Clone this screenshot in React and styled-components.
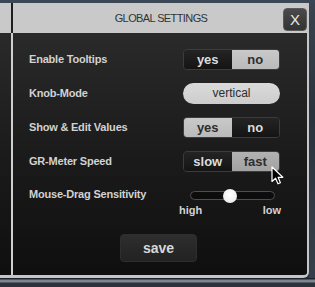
import React from 'react';
import styled, { createGlobalStyle } from 'styled-components';

const GlobalStyle = createGlobalStyle`
  body {
    margin: 0;
    background: #2b333d;
    font-family: "Liberation Sans", Arial, sans-serif;
  }
`;

const Screen = styled.div`
  width: 315px;
  height: 287px;
  display: flex;
  flex-direction: column;
  overflow: hidden;
`;

const TopStrip = styled.div`
  height: 3px;
  background: #3c4755;
`;

const Middle = styled.div`
  height: 275px;
  display: flex;
`;

const SideBg = styled.div`
  flex: 1;
  background: linear-gradient(180deg, #3a4452 0%, #2a323d 40%, #353f4c 100%);
`;

const BottomStrip = styled.div`
  height: 9px;
  background: linear-gradient(180deg, #1e232a 0px, #1e232a 1px, #7d858f 2px, #7d858f 4px, #2c333c 5px, #2c333c 100%);
`;

const Dialog = styled.div`
  width: 307px;
  display: flex;
  flex-direction: column;
  border-right: 2px solid #c6c6c6;
  border-bottom: 3px solid #c6c6c6;
  border-bottom-right-radius: 6px;
  overflow: hidden;
`;

const Header = styled.div`
  height: 30px;
  background: #c9c9c9;
  display: flex;
`;

const HeaderInner = styled.div`
  margin-left: 11px;
  border-left: 2px solid #1f1f1f;
  flex: 1;
  display: flex;
`;

const Title = styled.div`
  flex: 1;
  padding-left: 26px;
  text-align: center;
  line-height: 31px;
  font-size: 11px;
  letter-spacing: -0.6px;
  color: #333;
`;

const CloseButton = styled.button`
  width: 24px;
  height: 23px;
  align-self: flex-end;
  margin-bottom: 2px;
  padding: 0;
  border: 1px solid #5a5a5a;
  border-radius: 4px;
  background: linear-gradient(180deg, #4a4a4a, #333);
  color: #e8e8e8;
  font-family: "Liberation Sans", Arial, sans-serif;
  font-size: 15px;
`;

const Body = styled.div`
  height: 242px;
  display: flex;
  background: linear-gradient(180deg, #2a2a2a 0%, #1b1b1b 50%, #0f0f0f 100%);
`;

const Pane = styled.div`
  margin-left: 11px;
  border-left: 2px solid #cfcfcf;
  flex: 1;
  padding: 9px 27px 0 16px;
  display: flex;
  flex-direction: column;
`;

const Row = styled.div`
  height: 34px;
  display: flex;
  align-items: center;
  justify-content: space-between;
`;

const Label = styled.span`
  font-size: 11px;
  font-weight: bold;
  letter-spacing: -0.2px;
  color: #d2d2d2;
  line-height: 14px;
`;

const Segmented = styled.div`
  position: relative;
  width: 97px;
  height: 21px;
  box-sizing: border-box;
  display: flex;
  border: 1px solid #3c3c3c;
  border-radius: 4px;
`;

const Segment = styled.div`
  flex: 1;
  display: flex;
  align-items: center;
  justify-content: center;
  font-size: 13px;
  font-weight: bold;
  color: ${(p) => (p.$on ? '#2e2e2e' : '#dcdcdc')};
  background: ${(p) =>
    p.$hover
      ? 'linear-gradient(180deg, #b2b2b2, #a2a2a2)'
      : p.$on
      ? 'linear-gradient(180deg, #c9c9c9, #bababa)'
      : 'linear-gradient(180deg, #242424, #141414)'};
  &:first-child {
    border-radius: 3px 0 0 3px;
  }
  &:last-of-type {
    border-radius: 0 3px 3px 0;
  }
`;

const Pill = styled.div`
  width: 97px;
  height: 21px;
  border-radius: 11px;
  background: linear-gradient(180deg, #dadada, #cdcdcd);
  display: flex;
  align-items: center;
  justify-content: center;
  font-size: 12px;
  color: #2e2e2e;
`;

const Cursor = styled.svg`
  position: absolute;
  left: 87px;
  top: 14px;
  width: 13px;
  height: 19px;
`;

const SliderRow = styled.div`
  display: flex;
  justify-content: space-between;
  align-items: flex-start;
  padding-top: 9px;
`;

const SliderBlock = styled.div`
  width: 102px;
  margin-right: -1px;
  padding-top: 4px;
  display: flex;
  flex-direction: column;
`;

const Track = styled.div`
  position: relative;
  height: 9px;
  margin: 0 6px 0 11px;
  box-sizing: border-box;
  border: 1px solid #4e4e4e;
  border-radius: 5px;
  background: #0c0c0c;
`;

const Knob = styled.div`
  position: absolute;
  top: 50%;
  width: 14px;
  height: 14px;
  margin: -7px 0 0 -7px;
  border-radius: 50%;
  background: radial-gradient(circle at 50% 40%, #ffffff, #e6e6e6);
`;

const Scale = styled.div`
  margin-top: 5px;
  display: flex;
  justify-content: space-between;
  font-size: 11px;
  font-weight: bold;
  line-height: 11px;
  color: #d2d2d2;
`;

const SaveButton = styled.button`
  width: 77px;
  height: 28px;
  margin: 18px 0 0 91px;
  padding: 0;
  border: 1px solid #2e2e2e;
  border-radius: 4px;
  background: linear-gradient(180deg, #2e2e2e, #222);
  color: #d8d8d8;
  font-family: "Liberation Sans", Arial, sans-serif;
  font-size: 14px;
  font-weight: bold;
`;

const Toggle = ({ options, active, hover, children }) => (
  <Segmented>
    {options.map((o, i) => (
      <Segment key={o} $on={i === active} $hover={i === hover}>
        {o}
      </Segment>
    ))}
    {children}
  </Segmented>
);

const App = () => {
  const sensitivity = 47;
  return (
    <Screen>
      <GlobalStyle />
      <TopStrip />
      <Middle>
        <Dialog>
          <Header>
            <HeaderInner>
              <Title>GLOBAL SETTINGS</Title>
              <CloseButton>X</CloseButton>
            </HeaderInner>
          </Header>
          <Body>
            <Pane>
              <Row>
                <Label>Enable Tooltips</Label>
                <Toggle options={['yes', 'no']} active={1} />
              </Row>
              <Row>
                <Label>Knob-Mode</Label>
                <Pill>vertical</Pill>
              </Row>
              <Row>
                <Label>Show &amp; Edit Values</Label>
                <Toggle options={['yes', 'no']} active={0} />
              </Row>
              <Row>
                <Label>GR-Meter Speed</Label>
                <Toggle options={['slow', 'fast']} active={1} hover={1}>
                  <Cursor viewBox="0 0 13 19">
                    <path
                      d="M1 1 L1 15.5 L4.6 12.2 L7 17.8 L9.4 16.8 L7.1 11.3 L11.8 11.3 Z"
                      fill="#000"
                      stroke="#fff"
                      strokeWidth="1.2"
                      strokeLinejoin="round"
                    />
                  </Cursor>
                </Toggle>
              </Row>
              <SliderRow>
                <Label>Mouse-Drag Sensitivity</Label>
                <SliderBlock>
                  <Track>
                    <Knob style={{ left: `${sensitivity}%` }} />
                  </Track>
                  <Scale>
                    <span>high</span>
                    <span>low</span>
                  </Scale>
                </SliderBlock>
              </SliderRow>
              <SaveButton>save</SaveButton>
            </Pane>
          </Body>
        </Dialog>
        <SideBg />
      </Middle>
      <BottomStrip />
    </Screen>
  );
};

export default App;
